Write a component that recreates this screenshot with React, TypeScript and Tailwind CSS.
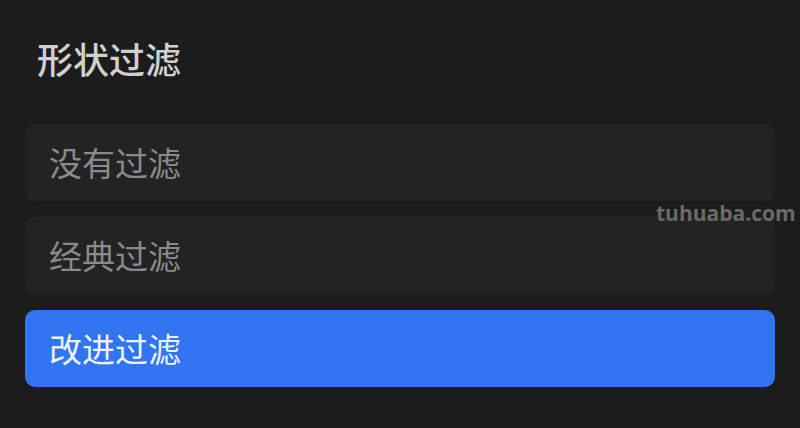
const OPTIONS = ["没有过滤", "经典过滤", "改进过滤"];

export default function App() {
  const selected = 2;
  return (
    <div
      className="relative h-[428px] w-[800px] overflow-hidden bg-[#1c1c1c] px-[25px]"
      style={{ fontFamily: '"Noto Sans CJK SC", "Noto Sans", sans-serif' }}
    >
      <h2 className="pl-[12px] pt-[38px] text-[36px] leading-[40px] font-medium text-[#d0d0d0]">
        形状过滤
      </h2>
      <div className="mt-[46px] flex flex-col gap-[16px]">
        {OPTIONS.map((label, i) => (
          <div
            key={label}
            className={`flex h-[77px] items-center rounded-[10px] pl-[24px] text-[33px] ${
              i === selected
                ? "bg-[#3176f0] text-[#eef3fb]"
                : "bg-[#232323] text-[#8a8a8a]"
            }`}
          >
            {label}
          </div>
        ))}
      </div>
      <span
        className="absolute left-[656px] top-[198px] text-[21px] font-bold text-[#6a6a6a]"
        style={{ fontFamily: '"Open Sans", "Noto Sans", sans-serif' }}
      >
        tuhuaba.com
      </span>
    </div>
  );
}
